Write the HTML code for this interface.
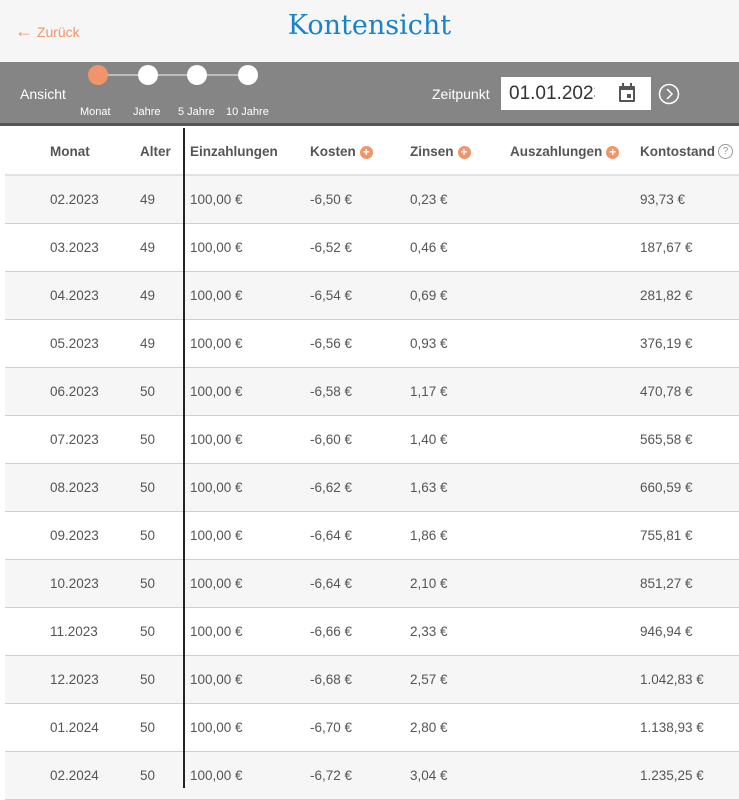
<!DOCTYPE html>
<html><head><meta charset="utf-8"><style>
*{margin:0;padding:0;box-sizing:border-box}
body{width:739px;height:787px;overflow:hidden;background:#fff;font-family:"Liberation Sans",sans-serif;color:#555;position:relative}
.top{position:absolute;left:0;top:0;width:739px;height:62px;background:#f6f6f6}
.back{position:absolute;left:15px;top:22px;color:#f0956a;font-size:14px;line-height:18px}
.title{position:absolute;left:0;width:739px;top:10px;text-align:center;font-family:"DejaVu Serif","Liberation Serif",serif;font-size:27px;color:#1a82c8}
.bar{position:absolute;left:0;top:62px;width:739px;height:64px;background:#858585;border-bottom:3px solid #555}
.w{color:#fff;position:absolute;font-size:14px}
.dot{position:absolute;top:3px;width:20px;height:20px;border-radius:50%;background:#fff}
.line{position:absolute;top:12px;height:2px;background:#bdbdbd}
.lab{position:absolute;top:44px;color:#fff;font-size:11px}
.inp{position:absolute;left:501px;top:15px;width:150px;height:33px;background:#fff;font-size:19px;color:#333;padding:6px 8px}
.inp span{display:block;width:86px;overflow:hidden;white-space:nowrap}
table{position:absolute;left:5px;top:129px;border-collapse:collapse;font-size:13.5px}
th{height:46px;font-weight:bold;color:#555;text-align:left;border-bottom:2px solid #e2e2e2;white-space:nowrap;vertical-align:middle}
td{height:48px;border-bottom:1px solid #cfcfcf;color:#555;white-space:nowrap;background:#fff}
tr.g td{background:#f6f6f6}
.p{display:inline-block;width:13px;height:13px;border-radius:50%;background:#f0956a;color:#fff;font-size:12px;line-height:13px;text-align:center;vertical-align:middle;margin-left:4px;font-weight:bold}
.q{display:inline-block;width:15px;height:15px;border-radius:50%;border:1px solid #999;color:#999;font-size:10px;line-height:13px;text-align:center;vertical-align:middle;margin-left:3px;font-weight:normal}
.vl{position:absolute;left:183px;top:128px;width:2px;height:660px;background:#222}
</style></head><body>
<div class="top"><div class="back"><span style="font-size:18px">&#8592;</span> Zurück</div><div class="title">Kontensicht</div></div>
<div class="bar">
<div class="w" style="left:20px;top:24px">Ansicht</div>
<div class="line" style="left:100px;width:148px"></div>
<div class="dot" style="left:88px;background:#f0956a"></div>
<div class="dot" style="left:138px"></div>
<div class="dot" style="left:187px"></div>
<div class="dot" style="left:238px"></div>
<div class="lab" style="left:80px">Monat</div>
<div class="lab" style="left:133px">Jahre</div>
<div class="lab" style="left:178px">5 Jahre</div>
<div class="lab" style="left:226px">10 Jahre</div>
<div class="w" style="left:432px;top:24px">Zeitpunkt</div>
<div class="inp"><span>01.01.2023</span></div>
<svg style="position:absolute;left:617px;top:20px" width="20" height="22" viewBox="0 0 20 22"><rect x="2" y="4" width="16" height="16" rx="1" fill="#555"/><rect x="4" y="8" width="12" height="10" fill="#fff"/><rect x="10" y="12" width="4" height="4" fill="#555"/><rect x="5" y="1" width="2" height="4" fill="#555"/><rect x="13" y="1" width="2" height="4" fill="#555"/></svg>
<svg style="position:absolute;left:658px;top:21px" width="22" height="22" viewBox="0 0 22 22"><circle cx="11" cy="11" r="9.5" fill="none" stroke="#fff" stroke-width="1.5"/><path d="M9 6l5 5-5 5" fill="none" stroke="#fff" stroke-width="1.5"/></svg>
</div>
<table>
<colgroup><col style="width:45px"><col style="width:90px"><col style="width:45px"><col style="width:125px"><col style="width:100px"><col style="width:100px"><col style="width:130px"><col style="width:99px"></colgroup>
<tr><th></th><th>Monat</th><th>Alter</th><th style="padding-left:5px">Einzahlungen</th><th>Kosten<span class="p">+</span></th><th>Zinsen<span class="p">+</span></th><th>Auszahlungen<span class="p">+</span></th><th>Kontostand<span class="q">?</span></th></tr>
<tr class="g"><td></td><td>02.2023</td><td>49</td><td style="padding-left:5px">100,00 €</td><td>-6,50 €</td><td>0,23 €</td><td></td><td>93,73 €</td></tr>
<tr><td></td><td>03.2023</td><td>49</td><td style="padding-left:5px">100,00 €</td><td>-6,52 €</td><td>0,46 €</td><td></td><td>187,67 €</td></tr>
<tr class="g"><td></td><td>04.2023</td><td>49</td><td style="padding-left:5px">100,00 €</td><td>-6,54 €</td><td>0,69 €</td><td></td><td>281,82 €</td></tr>
<tr><td></td><td>05.2023</td><td>49</td><td style="padding-left:5px">100,00 €</td><td>-6,56 €</td><td>0,93 €</td><td></td><td>376,19 €</td></tr>
<tr class="g"><td></td><td>06.2023</td><td>50</td><td style="padding-left:5px">100,00 €</td><td>-6,58 €</td><td>1,17 €</td><td></td><td>470,78 €</td></tr>
<tr><td></td><td>07.2023</td><td>50</td><td style="padding-left:5px">100,00 €</td><td>-6,60 €</td><td>1,40 €</td><td></td><td>565,58 €</td></tr>
<tr class="g"><td></td><td>08.2023</td><td>50</td><td style="padding-left:5px">100,00 €</td><td>-6,62 €</td><td>1,63 €</td><td></td><td>660,59 €</td></tr>
<tr><td></td><td>09.2023</td><td>50</td><td style="padding-left:5px">100,00 €</td><td>-6,64 €</td><td>1,86 €</td><td></td><td>755,81 €</td></tr>
<tr class="g"><td></td><td>10.2023</td><td>50</td><td style="padding-left:5px">100,00 €</td><td>-6,64 €</td><td>2,10 €</td><td></td><td>851,27 €</td></tr>
<tr><td></td><td>11.2023</td><td>50</td><td style="padding-left:5px">100,00 €</td><td>-6,66 €</td><td>2,33 €</td><td></td><td>946,94 €</td></tr>
<tr class="g"><td></td><td>12.2023</td><td>50</td><td style="padding-left:5px">100,00 €</td><td>-6,68 €</td><td>2,57 €</td><td></td><td>1.042,83 €</td></tr>
<tr><td></td><td>01.2024</td><td>50</td><td style="padding-left:5px">100,00 €</td><td>-6,70 €</td><td>2,80 €</td><td></td><td>1.138,93 €</td></tr>
<tr class="g"><td></td><td>02.2024</td><td>50</td><td style="padding-left:5px">100,00 €</td><td>-6,72 €</td><td>3,04 €</td><td></td><td>1.235,25 €</td></tr>
</table>
<div class="vl"></div>
</body></html>
